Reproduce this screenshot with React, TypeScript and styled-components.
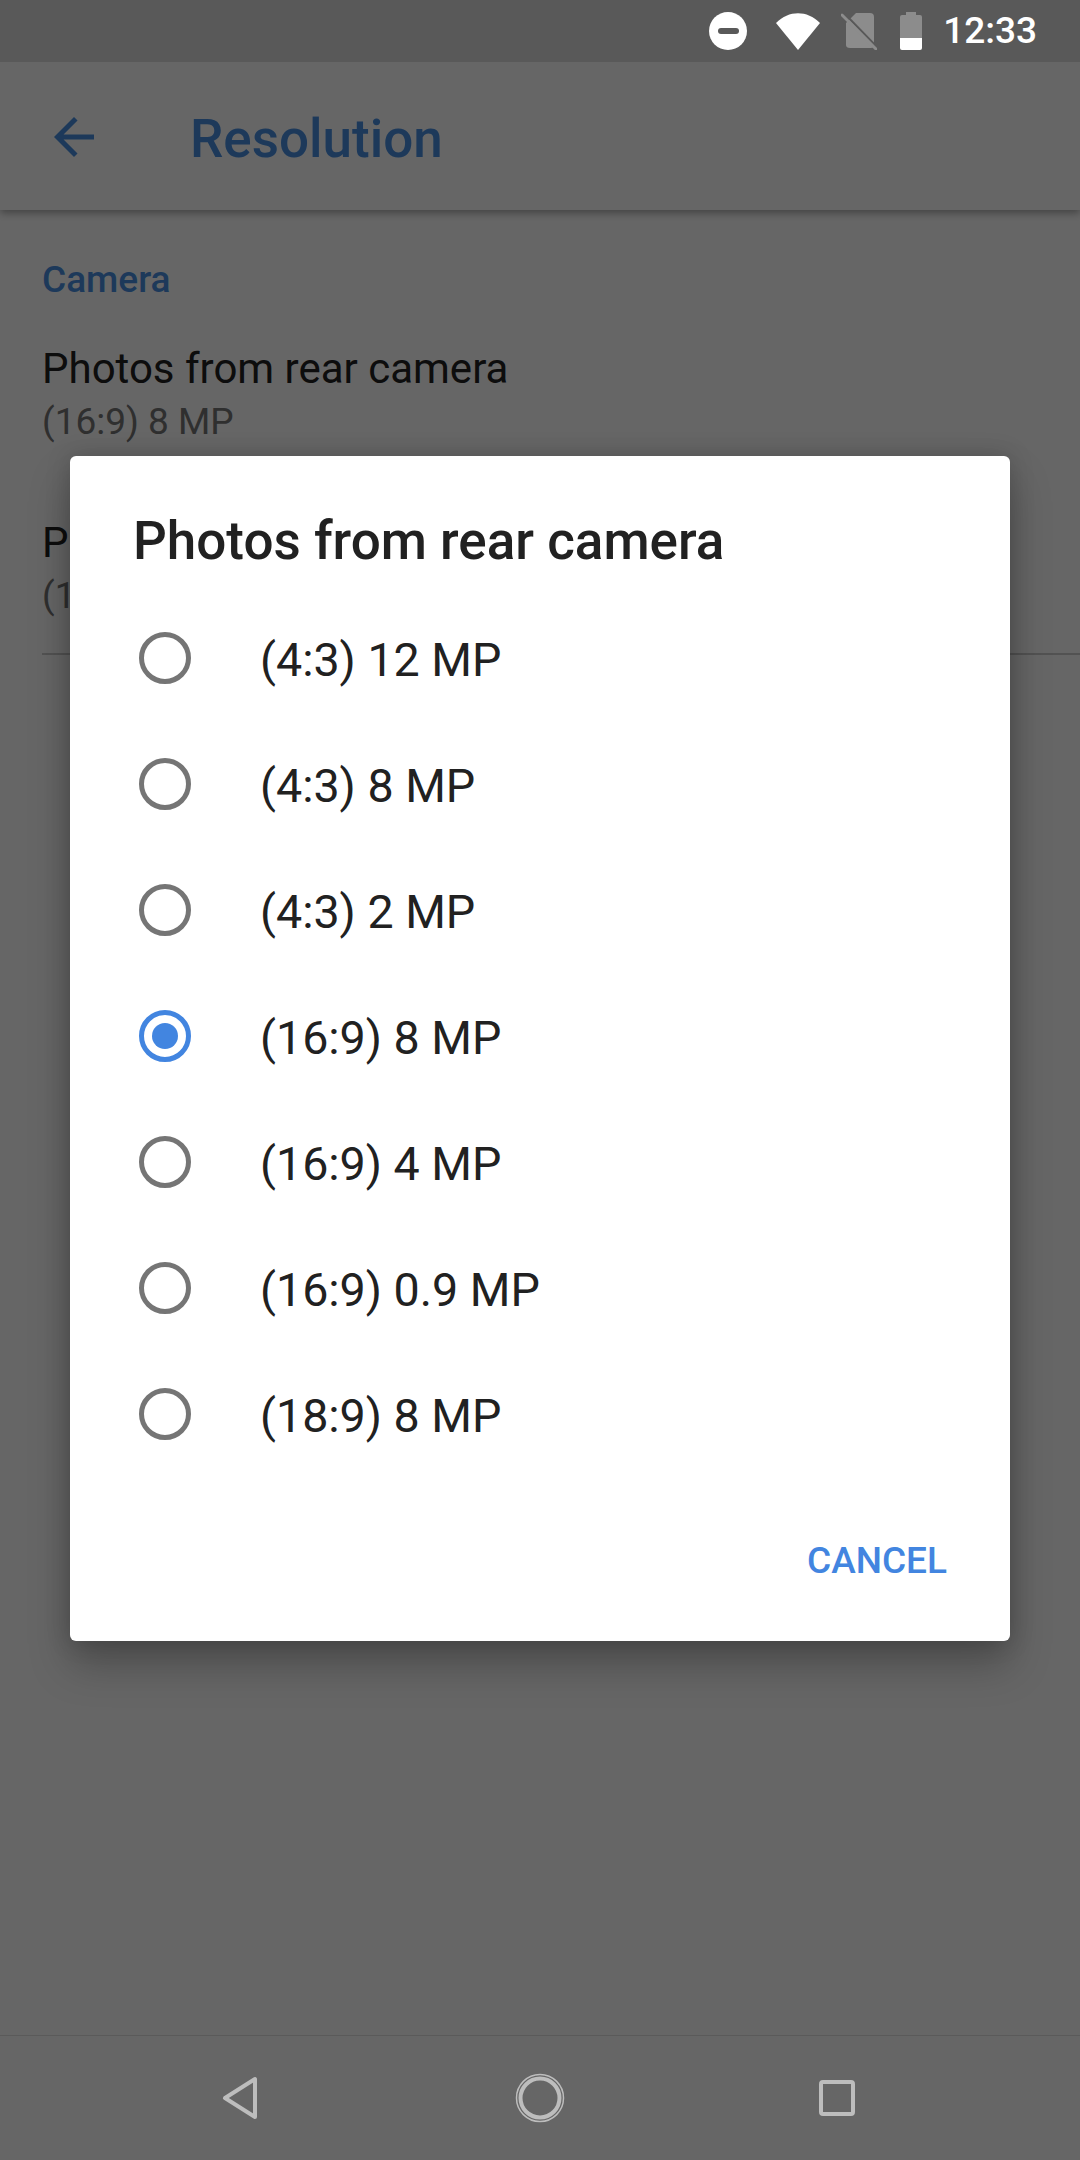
import React from "react";
import styled, { createGlobalStyle } from "styled-components";

const options = [
    "(4:3) 12 MP",
    "(4:3) 8 MP",
    "(4:3) 2 MP",
    "(16:9) 8 MP",
    "(16:9) 4 MP",
    "(16:9) 0.9 MP",
    "(18:9) 8 MP",
];
const selectedOption = "(16:9) 8 MP";

const App: React.FC = () => {
    return (
        <Screen>
            <GlobalStyle />
            <StatusBar>
                <StatusIcon width="38" height="38" viewBox="0 0 38 38" $left={0}>
                    <circle cx="19" cy="19" r="19" fill="#fff" />
                    <rect x="9" y="16" width="21" height="6" rx="3" fill="#595959" />
                </StatusIcon>
                <StatusIcon width="44" height="37" viewBox="0 0 44 37" $left={29}>
                    <path d="M0 10 C13 -3 31 -3 44 10 L22 37 Z" fill="#fff" />
                </StatusIcon>
                <StatusIcon width="36" height="38" viewBox="0 0 36 38" $left={21}>
                    <path d="M15 1 H29 Q33 1 33 5 V33 Q33 36 30 36 H9 Q5 36 5 33 V11 Z" fill="#8c8c8c" />
                    <path d="M3 1 L35 34" stroke="#595959" strokeWidth="2" />
                    <path d="M1 3 L35 37" stroke="#8c8c8c" strokeWidth="3" strokeLinecap="round" />
                </StatusIcon>
                <StatusIcon width="22" height="38" viewBox="0 0 22 38" $left={23}>
                    <path d="M6 0 H16 V3 H20 Q22 3 22 5 V26 H0 V5 Q0 3 2 3 H6 Z" fill="#8c8c8c" />
                    <path d="M0 26 H22 V36 Q22 38 20 38 H2 Q0 38 0 36 Z" fill="#fff" />
                </StatusIcon>
                <Clock>12:33</Clock>
            </StatusBar>

            <Toolbar>
                <BackIcon width="60" height="60" viewBox="0 0 24 24">
                    <path d="M20 11H7.83l5.59-5.59L12 4l-8 8 8 8 1.41-1.41L7.83 13H20v-2z" fill="#4a90e2" />
                </BackIcon>
                <ToolbarTitle>Resolution</ToolbarTitle>
            </Toolbar>

            <Content>
                <SectionLabel>Camera</SectionLabel>
                <SettingRow>
                    <SettingTitle>Photos from rear camera</SettingTitle>
                    <SettingValue>(16:9) 8 MP</SettingValue>
                </SettingRow>
                <SettingRow>
                    <SettingTitle>Photos from front camera</SettingTitle>
                    <SettingValue>(16:9) 8 MP</SettingValue>
                </SettingRow>
                <Divider />
            </Content>

            <NavBar>
                <svg width="36" height="44" viewBox="0 0 36 44">
                    <path d="M33 3 V41 L3 22 Z" fill="none" stroke="#bdbdbd" strokeWidth="4" strokeLinejoin="round" />
                </svg>
                <HomeIcon width="50" height="50" viewBox="0 0 50 50">
                    <circle cx="25" cy="25" r="23.5" fill="none" stroke="#bdbdbd" strokeWidth="1.5" />
                    <circle cx="25" cy="25" r="19.5" fill="none" stroke="#bdbdbd" strokeWidth="4" />
                </HomeIcon>
                <svg width="36" height="36" viewBox="0 0 36 36">
                    <rect x="2" y="2" width="32" height="32" rx="2" fill="none" stroke="#bdbdbd" strokeWidth="4" />
                </svg>
            </NavBar>

            <Scrim>
                <Dialog>
                    <DialogTitle>Photos from rear camera</DialogTitle>
                    <OptionList>
                        {options.map(option => (
                            <OptionRow key={option}>
                                <Radio $checked={option === selectedOption} />
                                <OptionLabel>{option}</OptionLabel>
                            </OptionRow>
                        ))}
                    </OptionList>
                    <DialogActions>
                        <CancelButton>CANCEL</CancelButton>
                    </DialogActions>
                </Dialog>
            </Scrim>
        </Screen>
    );
};

const GlobalStyle = createGlobalStyle`
    html, body {
        margin: 0;
        padding: 0;
        background: #fff;
        font-family: Roboto, "Liberation Sans", sans-serif;
    }
`;

const Screen = styled.div`
    position: relative;
    display: flex;
    flex-direction: column;
    width: 1080px;
    height: 2160px;
    overflow: hidden;
    background: #fff;
`;

const StatusBar = styled.div`
    position: relative;
    z-index: 3;
    display: flex;
    align-items: center;
    justify-content: flex-end;
    flex: none;
    height: 62px;
    padding-right: 43px;
    background: #595959;
`;

const StatusIcon = styled.svg<{ $left: number }>`
    flex: none;
    margin-left: ${props => props.$left}px;
`;

const Clock = styled.span`
    margin-left: 21px;
    color: #fff;
    font-size: 37px;
    font-weight: 500;
    line-height: 62px;
`;

const Toolbar = styled.div`
    display: flex;
    align-items: center;
    flex: none;
    height: 148px;
    padding-left: 44px;
    background: #fff;
    box-shadow: 0 3px 8px rgba(0, 0, 0, 0.35);
`;

const BackIcon = styled.svg`
    flex: none;
    margin-top: 2px;
`;

const ToolbarTitle = styled.div`
    margin: 6px 0 0 86px;
    color: #4a90e2;
    font-size: 53px;
    font-weight: 500;
`;

const Content = styled.div`
    flex: 1;
    padding: 49px 0 0 42px;
`;

const SectionLabel = styled.div`
    color: #4a90e2;
    font-size: 37px;
    font-weight: 500;
    line-height: 42px;
`;

const SettingRow = styled.div`
    padding: 42px 0 28px;
`;

const SettingTitle = styled.div`
    color: #212121;
    font-size: 42px;
    line-height: 52px;
`;

const SettingValue = styled.div`
    margin-top: 2px;
    color: #757575;
    font-size: 37px;
    line-height: 50px;
`;

const Divider = styled.div`
    height: 2px;
    margin-top: 4px;
    background: #ccc;
`;

const NavBar = styled.div`
    position: relative;
    z-index: 3;
    display: flex;
    align-items: center;
    justify-content: space-between;
    flex: none;
    height: 124px;
    padding: 0 225px 0 222px;
    background: #666;
    border-top: 1px solid #5a5a5a;
`;

const HomeIcon = styled.svg`
    flex: none;
    margin-left: 3px;
`;

const Scrim = styled.div`
    position: absolute;
    inset: 62px 0 125px 0;
    z-index: 2;
    display: flex;
    align-items: center;
    justify-content: center;
    background: rgba(0, 0, 0, 0.6);
`;

const Dialog = styled.div`
    width: 940px;
    background: #fff;
    border-radius: 6px;
    box-shadow: 0 24px 40px rgba(0, 0, 0, 0.25), 0 0 24px rgba(0, 0, 0, 0.18);
`;

const DialogTitle = styled.div`
    padding: 55px 0 0 63px;
    height: 84px;
    color: #212121;
    font-size: 53px;
    font-weight: 500;
    line-height: 60px;
`;

const OptionList = styled.div`
    display: flex;
    flex-direction: column;
`;

const OptionRow = styled.div`
    display: flex;
    align-items: center;
    height: 126px;
    padding-left: 69px;
`;

const Radio = styled.span<{ $checked?: boolean }>`
    position: relative;
    flex: none;
    box-sizing: border-box;
    width: 52px;
    height: 52px;
    border: 5px solid ${props => (props.$checked ? "#4285e0" : "#757575")};
    border-radius: 50%;

    &::after {
        content: "";
        display: ${props => (props.$checked ? "block" : "none")};
        position: absolute;
        inset: 8px;
        border-radius: 50%;
        background: #4285e0;
    }
`;

const OptionLabel = styled.span`
    margin: 3px 0 0 69px;
    color: #212121;
    font-size: 46.6px;
`;

const DialogActions = styled.div`
    display: flex;
    justify-content: flex-end;
    padding: 44px 63px 40px 0;
`;

const CancelButton = styled.div`
    color: #4285e0;
    font-size: 37px;
    font-weight: 500;
    line-height: 80px;
`;

export default App;
